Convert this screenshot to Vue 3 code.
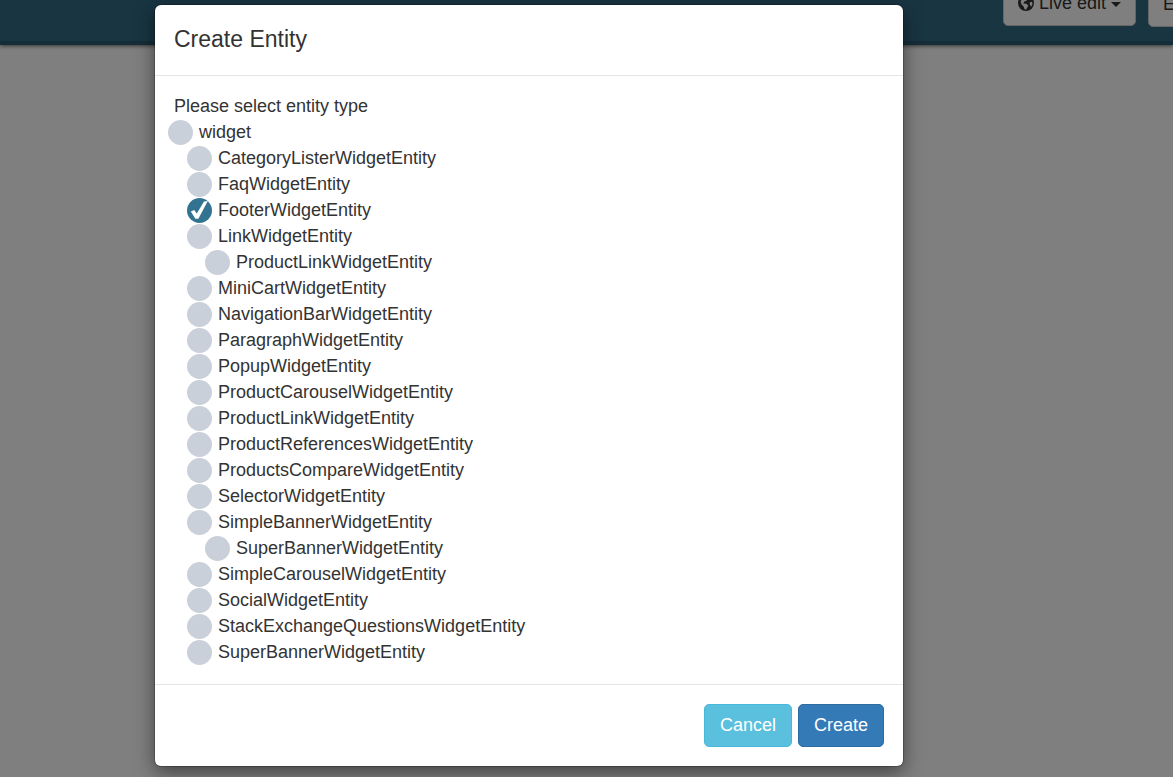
<script setup>
import { ref } from 'vue'

const types = [
  { name: 'widget', level: 0 },
  { name: 'CategoryListerWidgetEntity', level: 1 },
  { name: 'FaqWidgetEntity', level: 1 },
  { name: 'FooterWidgetEntity', level: 1 },
  { name: 'LinkWidgetEntity', level: 1 },
  { name: 'ProductLinkWidgetEntity', level: 2 },
  { name: 'MiniCartWidgetEntity', level: 1 },
  { name: 'NavigationBarWidgetEntity', level: 1 },
  { name: 'ParagraphWidgetEntity', level: 1 },
  { name: 'PopupWidgetEntity', level: 1 },
  { name: 'ProductCarouselWidgetEntity', level: 1 },
  { name: 'ProductLinkWidgetEntity', level: 1 },
  { name: 'ProductReferencesWidgetEntity', level: 1 },
  { name: 'ProductsCompareWidgetEntity', level: 1 },
  { name: 'SelectorWidgetEntity', level: 1 },
  { name: 'SimpleBannerWidgetEntity', level: 1 },
  { name: 'SuperBannerWidgetEntity', level: 2 },
  { name: 'SimpleCarouselWidgetEntity', level: 1 },
  { name: 'SocialWidgetEntity', level: 1 },
  { name: 'StackExchangeQuestionsWidgetEntity', level: 1 },
  { name: 'SuperBannerWidgetEntity', level: 1 }
]
const selected = ref(3)
</script>

<template>
  <div class="page">
    <header class="topbar">
      <button type="button" class="tool live">
        <svg class="globe" viewBox="0 0 16 16" aria-hidden="true">
          <circle cx="8" cy="8" r="8" fill="#333" />
          <path fill="#fff" d="M5 2 8 1.4 10.4 3.2 8.8 5.4 6.4 6.6 5.2 8.6 8.4 8.8 10.4 10.8 9 12.8 8.4 14.6 6.6 14.2 5.6 11.4 3.6 9.4 2.6 6.6zM11.6 7.4 13.8 6.8 14.6 8.6 13.4 11.4 12.2 10.4z" />
        </svg>
        <span>Live edit</span>
        <span class="caret"></span>
      </button>
      <button type="button" class="tool more">E</button>
    </header>

    <div class="backdrop">
      <form class="dialog" role="dialog" aria-labelledby="dialog-title" @submit.prevent>
        <div class="dialog-header">
          <h4 id="dialog-title">Create Entity</h4>
        </div>
        <fieldset class="dialog-body">
          <legend>Please select entity type</legend>
          <label v-for="(type, i) in types" :key="i" :class="['option', 'level-' + type.level]">
            <span class="mark">
              <input v-model="selected" type="radio" name="entity-type" :value="i" />
              <svg v-if="selected === i" viewBox="0 0 25 25" aria-hidden="true">
                <path fill="#fff" d="M3.8 13.6 7.2 12 9.8 15.4 17 3.6 20.8 3 11.4 20.8 8.4 20.8z" />
              </svg>
            </span>
            <span>{{ type.name }}</span>
          </label>
        </fieldset>
        <div class="dialog-footer">
          <button type="button" class="btn cancel">Cancel</button>
          <button type="submit" class="btn create">Create</button>
        </div>
      </form>
    </div>
  </div>
</template>

<style>
body {
  margin: 0;
}
</style>

<style scoped>
* {
  box-sizing: border-box;
}
.page {
  min-height: 100vh;
  background: #fff;
  color: #333;
  font: 18px/26px "Liberation Sans", Arial, sans-serif;
}
.topbar {
  display: flex;
  justify-content: flex-end;
  align-items: flex-end;
  gap: 12px;
  height: 45px;
  padding-bottom: 14px;
  overflow: hidden;
  background: #326a84;
  border-bottom: 4px solid #2a5a70;
  box-shadow: 0 1px 4px rgba(0, 0, 0, 0.6);
}
.tool {
  display: flex;
  align-items: center;
  flex: none;
  height: 43px;
  padding: 0 14px 4px;
  border: 1px solid #ccc;
  border-radius: 5px;
  background: #fff;
  color: #333;
  font: inherit;
}
.live {
  gap: 5px;
  margin-bottom: 1px;
}
.more {
  margin-right: -17px;
}
.globe {
  width: 16px;
  height: 16px;
}
.caret {
  margin-top: 4px;
  border: 5px solid transparent;
  border-top-color: #333;
  border-bottom: 0;
}
.backdrop {
  position: absolute;
  inset: 0;
  padding: 5px 115px 11px 0;
  background: rgba(0, 0, 0, 0.5);
  overflow: hidden;
}
.dialog {
  width: 100%;
  max-width: 748px;
  margin: 0 auto;
  background: #fff;
  border-radius: 6px;
  box-shadow: 0 0 0 1px rgba(0, 0, 0, 0.2), 0 6px 19px rgba(0, 0, 0, 0.5);
}
.dialog-header {
  padding: 18px 19px 19px;
  border-bottom: 1px solid #e5e5e5;
}
h4 {
  margin: 0;
  font-size: 23px;
  line-height: 33px;
  font-weight: 400;
}
.dialog-body {
  margin: 0;
  padding: 17px 19px 19px;
  border: 0;
}
legend {
  float: left;
  width: 100%;
  padding: 0;
}
.option {
  display: flex;
  clear: both;
  gap: 6px;
}
.level-0 {
  margin-left: -6px;
}
.level-1 {
  margin-left: 13px;
}
.level-2 {
  margin-left: 31px;
}
.mark {
  display: grid;
  width: 25px;
  padding-top: 1px;
}
.mark > * {
  grid-area: 1 / 1;
  width: 25px;
  height: 25px;
}
.mark input {
  appearance: none;
  margin: 0;
  border-radius: 50%;
  background: #cad0d9;
}
.mark input:checked {
  background: #337392;
}
.mark svg {
  pointer-events: none;
}
.dialog-footer {
  display: flex;
  justify-content: flex-end;
  gap: 6px;
  padding: 19px;
  border-top: 1px solid #e5e5e5;
}
.btn {
  height: 43px;
  padding: 0 15px 2px;
  border: 1px solid;
  border-radius: 5px;
  color: #fff;
  font: inherit;
}
.cancel {
  background: #5bc0de;
  border-color: #46b8da;
}
.create {
  background: #337ab7;
  border-color: #2e6da4;
}
</style>
